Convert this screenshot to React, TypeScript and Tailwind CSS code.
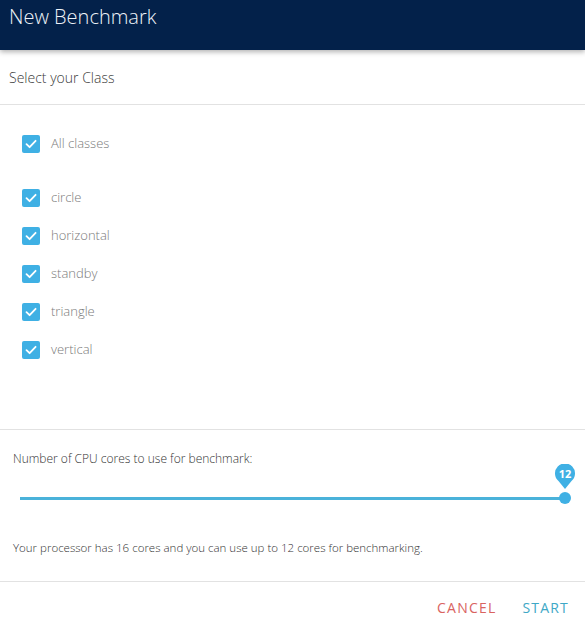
import React from 'react';

const classes = ['circle', 'horizontal', 'standby', 'triangle', 'vertical'];

const CheckBox = () => (
    <span className="w-[18px] h-[18px] rounded-[2px] bg-[#3fb0e4] flex items-center justify-center flex-none">
        <svg width="12" height="10" viewBox="0 0 12 10" fill="none">
            <path d="M1.5 5.2 L4.6 8.2 L10.6 1.8" stroke="#ffffff" strokeWidth="1.8" strokeLinecap="round" strokeLinejoin="round" />
        </svg>
    </span>
);

const Row = ({ label }: { label: string }) => (
    <div className="h-[38px] flex items-center pl-[22px]">
        <CheckBox />
        <span className="ml-[11px] text-[13px] text-[#7a7a7a] font-light">{label}</span>
    </div>
);

export default function App() {
    const value = 12;
    const max = 12;
    const pct = (value / max) * 100;

    return (
        <div className="w-[585px] h-[629px] bg-white flex flex-col overflow-hidden font-['Open_Sans',sans-serif]">
            <div className="h-[50px] flex-none bg-[#03214a] px-[9px] pt-[3px] shadow-[0_2px_5px_rgba(0,0,0,0.3)] relative z-10">
                <h1 className="text-[20px] leading-[28px] text-[#eef3f8] font-light">New Benchmark</h1>
            </div>

            <div className="h-[55px] flex-none flex items-center px-[9px] border-b border-[#e2e2e2]">
                <span className="text-[14px] text-[#3a3a3a] font-light">Select your Class</span>
            </div>

            <div className="h-[325px] flex-none pt-[20px] border-b border-[#e2e2e2]">
                <Row label="All classes" />
                <div className="mt-[16px]">
                    {classes.map((c) => (
                        <Row key={c} label={c} />
                    ))}
                </div>
            </div>

            <div className="h-[152px] flex-none px-[13px] pt-[21px] border-b border-[#e2e2e2]">
                <p className="text-[12px] leading-[16px] text-[#333] font-light">Number of CPU cores to use for benchmark:</p>
                <div className="relative h-[50px] mx-[7px]">
                    <div className="absolute left-0 right-0 top-[30px] h-[3px] bg-[#4ab2da]" />
                    <div
                        className="absolute top-[25px] w-[12px] h-[12px] -ml-[6px] rounded-full bg-[#3fb0e4]"
                        style={{ left: `${pct}%` }}
                    />
                    <div
                        className="absolute -top-[3px] -ml-[10px] w-[20px] h-[26px]"
                        style={{ left: `${pct}%` }}
                    >
                        <svg width="20" height="26" viewBox="0 0 20 26" className="absolute inset-0">
                            <path d="M10 25 L3.5 17 A10 10 0 1 1 16.5 17 Z" fill="#3fb0e4" />
                        </svg>
                        <span className="absolute left-0 right-0 top-[3px] text-center text-[11px] leading-[14px] font-bold text-white">12</span>
                    </div>
                </div>
                <p className="mt-[23px] text-[11.5px] leading-[16px] text-[#333] font-light">
                    Your processor has 16 cores and you can use up to 12 cores for benchmarking.
                </p>
            </div>

            <div className="flex-1 flex items-center justify-end pr-[16px] gap-[26px] pt-[4px]">
                <button className="text-[14px] tracking-[1.2px] text-[#d9635f]">CANCEL</button>
                <button className="text-[14px] tracking-[1.2px] text-[#3ea8c6]">START</button>
            </div>
        </div>
    );
}
